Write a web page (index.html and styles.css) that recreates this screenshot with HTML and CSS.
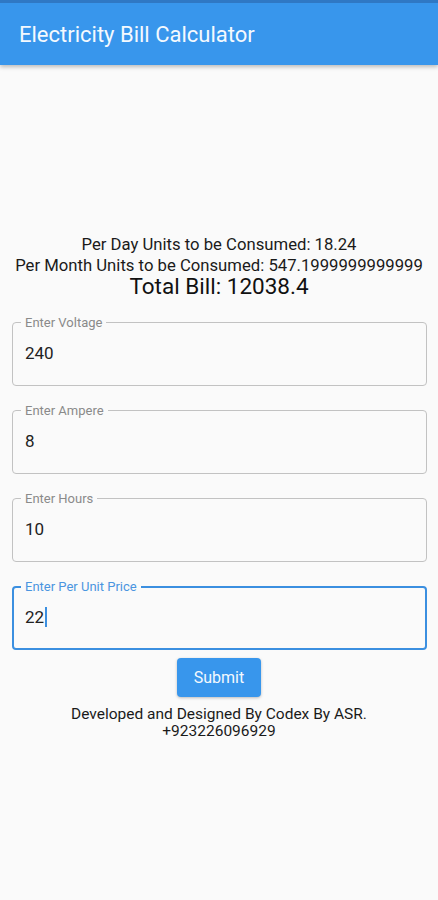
FILE: index.html
```html
<!DOCTYPE html>
<html lang="en">
<head>
    <meta charset="UTF-8">
    <meta name="viewport" content="width=device-width, initial-scale=1.0">
    <title>Electricity Bill Calculator</title>
    <link rel="stylesheet" href="styles.css">
</head>
<body>
    <header class="appbar">
        <h1>Electricity Bill Calculator</h1>
    </header>

    <main>
        <div class="results">
            <p>Per Day Units to be Consumed: 18.24</p>
            <p>Per Month Units to be Consumed: 547.1999999999999</p>
            <p class="total">Total Bill: 12038.4</p>
        </div>

        <div class="field">
            <span class="label">Enter Voltage</span>
            <span class="value">240</span>
        </div>

        <div class="field">
            <span class="label">Enter Ampere</span>
            <span class="value">8</span>
        </div>

        <div class="field">
            <span class="label">Enter Hours</span>
            <span class="value">10</span>
        </div>

        <div class="field focused">
            <span class="label">Enter Per Unit Price</span>
            <span class="value">22<span class="caret"></span></span>
        </div>

        <div class="actions">
            <button class="submit-btn">Submit</button>
        </div>

        <div class="credit">
            <p>Developed and Designed By Codex By ASR.</p>
            <p>+923226096929</p>
        </div>
    </main>
</body>
</html>
```

FILE: styles.css
```css
body {
    font-family: Roboto, "Noto Sans", sans-serif;
    margin: 0;
    padding: 0;
    background-color: #fafafa;
    color: #1a1a1a;
}

.appbar {
    background-color: #3896ec;
    border-top: 3px solid #2f78c4;
    height: 62px;
    display: flex;
    align-items: center;
    padding-left: 19px;
    box-shadow: 0 2px 4px rgba(0, 0, 0, 0.25);
}

.appbar h1 {
    margin: 0;
    color: #f4f9fe;
    font-size: 22px;
    font-weight: 400;
}

main {
    padding-top: 169px;
}

.results {
    text-align: center;
    margin-bottom: 25px;
}

.results p {
    margin: 0;
    font-size: 16.7px;
    line-height: 21px;
}

.results .total {
    font-size: 22.5px;
    font-weight: 400;
    color: #111;
}

.field {
    position: relative;
    box-sizing: border-box;
    height: 64px;
    margin: 0 11px 24px 12px;
    padding: 20px 12px 0;
    border: 1px solid #c2c2c2;
    border-radius: 4px;
}

.field .label {
    position: absolute;
    top: -8px;
    left: 8px;
    padding: 0 4px;
    background-color: #fafafa;
    font-size: 13px;
    line-height: 15px;
    color: #8a8a8a;
}

.field .value {
    font-size: 17px;
    line-height: 20px;
    color: #222;
}

.field.focused {
    border: 2px solid #3b8fe0;
    padding: 19px 11px 0;
}

.field.focused .label {
    top: -9px;
    left: 7px;
    color: #4a95e0;
}

.caret {
    display: inline-block;
    width: 2px;
    height: 20px;
    margin-left: 1px;
    vertical-align: -4px;
    background-color: #3b8fe0;
}

.actions {
    text-align: center;
    margin-top: -16px;
}

.submit-btn {
    height: 39px;
    padding: 0 17px;
    border: none;
    border-radius: 4px;
    background-color: #3896ec;
    color: #f4f9fe;
    font-family: Roboto, sans-serif;
    font-size: 16px;
    box-shadow: 0 1px 3px rgba(0, 0, 0, 0.25);
}

.credit {
    margin-top: 9px;
    text-align: center;
}

.credit p {
    margin: 0;
    font-size: 15.5px;
    line-height: 17px;
}
```
